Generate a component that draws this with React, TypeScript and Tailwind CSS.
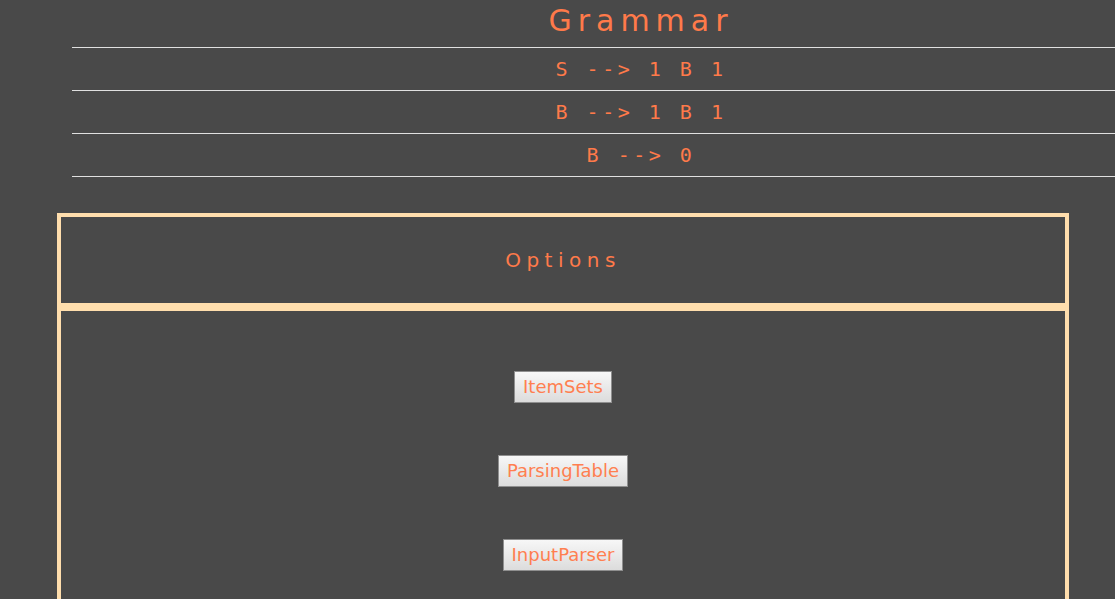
const rules = ["S --> 1 B 1", "B --> 1 B 1", "B --> 0"];
const options = ["ItemSets", "ParsingTable", "InputParser"];

export default function App() {
  return (
    <div className="min-h-screen overflow-hidden bg-[#494949] font-['DejaVu_Sans',sans-serif] text-[#ff7a4a]">
      <div className="pl-[72px]">
        <div className="w-[1138px]">
          <h1 className="h-[47px] text-center text-[30px] leading-[42px] tracking-[6px]">Grammar</h1>
          {rules.map((r) => (
            <div
              key={r}
              className="h-[43px] border-t border-[#e0e0e0] text-center font-['DejaVu_Sans_Mono',monospace] text-[20px] leading-[42px] tracking-[3.5px] whitespace-pre"
            >
              {r}
            </div>
          ))}
          <div className="border-t border-[#e0e0e0]" />
        </div>
      </div>

      <div className="ml-[57px] mt-[36px] w-[1012px]">
        <div className="flex h-[94px] items-center justify-center border-4 border-[#ffdead]">
          <h2 className="text-[20px] tracking-[5.5px]">Options</h2>
        </div>
        <div className="flex h-[400px] flex-col items-center gap-[52px] border-4 border-[#ffdead] pt-[60px]">
          {options.map((o) => (
            <button
              key={o}
              className="h-[32px] border border-[#8f8f8f] bg-gradient-to-b from-[#f7f7f7] to-[#dcdcdc] px-[8px] text-[18px] leading-[20px] text-[#ff7f50]"
            >
              {o}
            </button>
          ))}
        </div>
      </div>
    </div>
  );
}
